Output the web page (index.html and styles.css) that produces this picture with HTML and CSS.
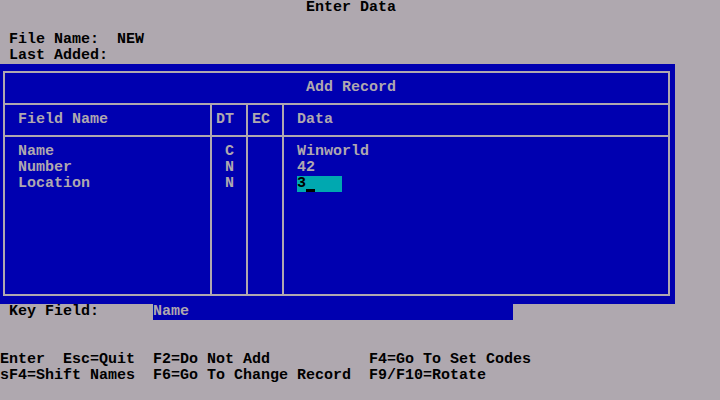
FILE: index.html
```html
<!DOCTYPE html>
<html lang="en">
    <head>
        <meta charset="UTF-8">
        <title>Enter Data</title>
        <link rel="stylesheet" href="styles.css">
    </head>
    <body>
        <div class="screen">
            <div class="line title">Enter Data</div>
            <div class="line"></div>
            <div class="line indent"><span class="label">File Name:</span>NEW</div>
            <div class="line indent">Last Added:</div>

            <div class="panel">
                <div class="frame">
                    <div class="frameTitle">Add Record</div>
                    <div class="fields">
                        <div class="cell head wide">Field Name</div>
                        <div class="cell head">DT</div>
                        <div class="cell head">EC</div>
                        <div class="cell head wide last">Data</div>

                        <div class="cell wide">
                            <div class="line">Name</div>
                            <div class="line">Number</div>
                            <div class="line">Location</div>
                        </div>
                        <div class="cell wide">
                            <div class="line">C</div>
                            <div class="line">N</div>
                            <div class="line">N</div>
                        </div>
                        <div class="cell"></div>
                        <div class="cell wide last">
                            <div class="line">Winworld</div>
                            <div class="line">42</div>
                            <div class="line"><span class="input">3<span class="cursor"></span></span></div>
                        </div>
                    </div>
                </div>
            </div>

            <div class="line keyRow">
                <span class="keyLabel">Key Field:</span>
                <span class="keyValue">Name</span>
            </div>
            <div class="line"></div>
            <div class="line"></div>
            <div class="keys">
                <div class="line">Enter  Esc=Quit</div>
                <div class="line">F2=Do Not Add</div>
                <div class="line">F4=Go To Set Codes</div>
                <div class="line">sF4=Shift Names</div>
                <div class="line">F6=Go To Change Record</div>
                <div class="line">F9/F10=Rotate</div>
            </div>
        </div>
    </body>
</html>
```

FILE: styles.css
```css
body {
    margin: 0;
    background: #afa8af;
}

.screen {
    width: 720px;
    height: 400px;
    overflow: hidden;
    background: #afa8af;
    color: #000;
    font-family: "Liberation Mono", "DejaVu Sans Mono", monospace;
    font-size: 15px;
    font-weight: bold;
    line-height: 16px;
}

.line {
    height: 16px;
    white-space: pre;
}

.title {
    padding-left: 34ch;
}

.indent {
    padding-left: 1ch;
}

.label {
    display: inline-block;
    width: 12ch;
}

/* blue window */
.panel {
    box-sizing: border-box;
    width: 675px;
    height: 240px;
    padding: 7px 5px 8px 3px;
    background: #0000b0;
    color: #afa8af;
}

.frame {
    box-sizing: border-box;
    height: 100%;
    border: 2px solid #afa8af;
    display: flex;
    flex-direction: column;
}

.frameTitle {
    flex-shrink: 0;
    height: 32px;
    padding: 7px 0 0 301px;
    box-sizing: border-box;
    border-bottom: 2px solid #afa8af;
    white-space: pre;
}

.fields {
    flex: 1;
    min-height: 0;
    display: grid;
    grid-template-columns: 207px 36px 36px 1fr;
    grid-template-rows: 32px 1fr;
}

.cell {
    box-sizing: border-box;
    min-height: 0;
    padding: 7px 0 0 4px;
    border-right: 2px solid #afa8af;
}

.cell.wide {
    padding-left: 13px;
}

.cell.last {
    border-right: none;
}

.cell.head {
    border-bottom: 2px solid #afa8af;
    white-space: pre;
}

.input {
    display: inline-block;
    width: 5ch;
    height: 16px;
    background: #00a8b0;
    color: #000;
}

.cursor {
    display: inline-block;
    width: 1ch;
    height: 3px;
    background: #000;
    vertical-align: bottom;
}

.keyRow {
    display: flex;
    padding-left: 1ch;
}

.keyLabel {
    width: 16ch;
}

.keyValue {
    width: 40ch;
    background: #0000b0;
    color: #afa8af;
}

.keys {
    display: grid;
    grid-template-columns: 17ch 24ch auto;
}
```
